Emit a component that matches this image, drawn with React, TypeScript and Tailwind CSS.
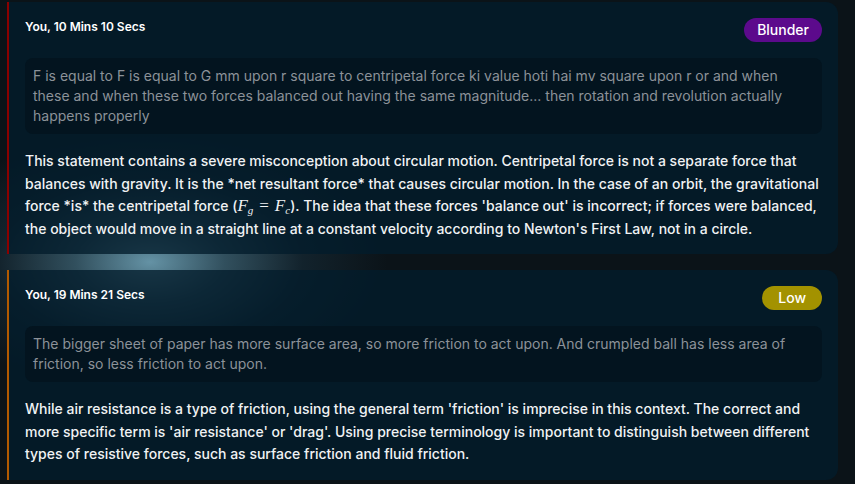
import React from "react";

type Item = {
  who: string;
  badge: string;
  badgeClass: string;
  borderClass: string;
  quote: string;
  feedback: React.ReactNode;
};

const items: Item[] = [
  {
    who: "You, 10 Mins 10 Secs",
    badge: "Blunder",
    badgeClass: "bg-[#5c0a8c] px-[13px]",
    borderClass: "border-l-[#8b0000]",
    quote:
      "F is equal to F is equal to G mm upon r square to centripetal force ki value hoti hai mv square upon r or and when these and when these two forces balanced out having the same magnitude... then rotation and revolution actually happens properly",
    feedback: (
      <>
        This statement contains a severe misconception about circular motion. Centripetal force is not a separate force that
        balances with gravity. It is the *net resultant force* that causes circular motion. In the case of an orbit, the gravitational
        force *is* the centripetal force (
        <span className="font-['Liberation_Serif',serif] text-[17px] font-normal leading-none">
          <i>F</i>
          <sub className="text-[11px]"><i>g</i></sub>
          <span className="px-[6px]">=</span>
          <i>F</i>
          <sub className="text-[11px]"><i>c</i></sub>
        </span>
        ). The idea that these forces 'balance out' is incorrect; if forces were balanced, the object would move in a straight line
        at a constant velocity according to Newton's First Law, not in a circle.
      </>
    ),
  },
  {
    who: "You, 19 Mins 21 Secs",
    badge: "Low",
    badgeClass: "bg-[#a39200] px-4",
    borderClass: "border-l-[#b35a00]",
    quote:
      "The bigger sheet of paper has more surface area, so more friction to act upon. And crumpled ball has less area of friction, so less friction to act upon.",
    feedback: (
      <>
        While air resistance is a type of friction, using the general term 'friction' is imprecise in this context. The correct and
        more specific term is 'air resistance' or 'drag'. Using precise terminology is important to distinguish between different
        types of resistive forces, such as surface friction and fluid friction.
      </>
    ),
  },
];

function FeedbackCard({ item }: { item: Item }) {
  return (
    <div className={`relative rounded-r-xl border-l-2 ${item.borderClass} bg-[#021c2b]/[0.78] px-4 pt-4 pb-[14px]`}>
      <div className="flex items-start justify-between">
        <span className="mt-[1px] text-xs font-semibold leading-4 text-white">{item.who}</span>
        <span className={`${item.badgeClass} flex h-6 items-center rounded-full text-sm font-medium text-white`}>
          {item.badge}
        </span>
      </div>
      <div className="mt-4 rounded-lg bg-[#03141f] px-2 py-2 text-sm leading-5 text-[#8c9299]">{item.quote}</div>
      <p className="mt-4 text-sm font-medium leading-[22.5px] text-[#f0f2f4]">{item.feedback}</p>
    </div>
  );
}

export default function App() {
  return (
    <div className="relative min-h-[484px] w-full overflow-hidden bg-[#0b1318] pl-[7px] pr-[17px] pt-[2px] font-['Inter','Noto_Sans',sans-serif]">
      {/* glow behind cards */}
      <div className="pointer-events-none absolute left-[-90px] top-[130px] h-[264px] w-[480px] bg-[radial-gradient(ellipse_at_center,rgba(110,160,180,0.9)_0%,rgba(75,120,140,0.6)_22%,rgba(35,70,90,0.3)_45%,rgba(11,19,24,0)_70%)]" />
      <div className="relative flex flex-col gap-4">
        {items.map((item) => (
          <FeedbackCard key={item.who} item={item} />
        ))}
      </div>
    </div>
  );
}
